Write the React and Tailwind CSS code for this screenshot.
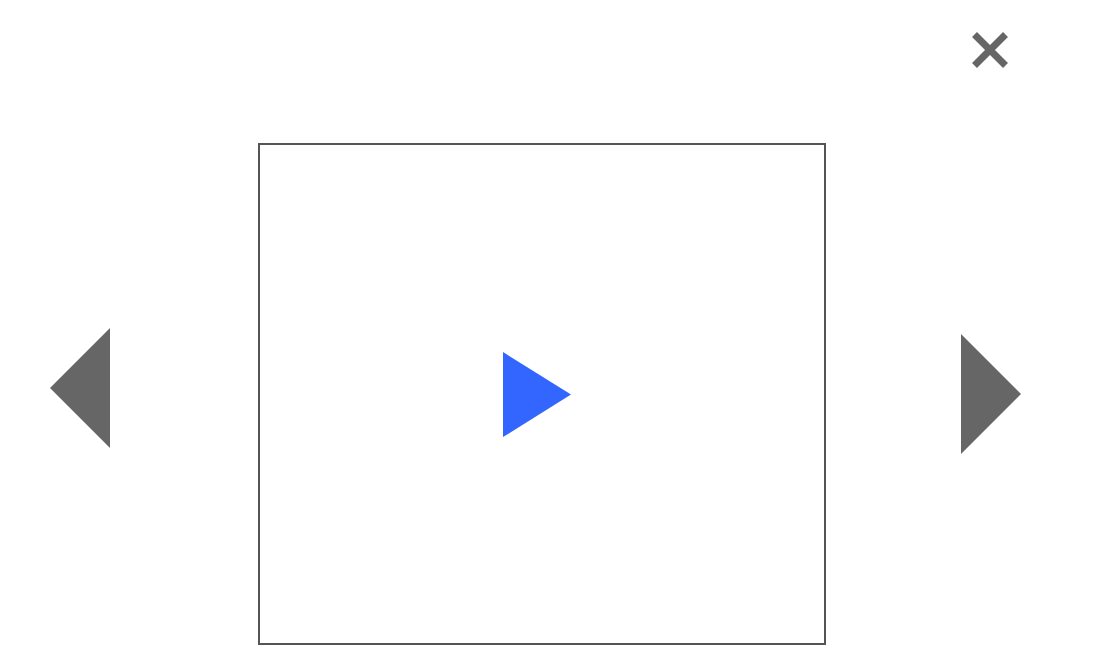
export default function App() {
  return (
    <div className="w-[1100px] h-[645px] bg-white overflow-hidden flex flex-col" style={{ fontFamily: '"Liberation Sans", sans-serif' }}>
      <div className="flex justify-end pt-[32px] pr-[92px]">
        <button className="w-[36px] h-[36px] block" aria-label="close">
          <svg width="36" height="36" viewBox="0 0 36 36">
            <path d="M2.5 2.5 L33.5 33.5 M33.5 2.5 L2.5 33.5" stroke="#666666" strokeWidth="7" strokeLinecap="butt" fill="none" />
          </svg>
        </button>
      </div>
      <div className="flex items-start mt-[75px] pl-[50px]">
        <button className="mt-[185px] block w-[60px] h-[120px]" aria-label="previous">
          <svg width="60" height="120" viewBox="0 0 60 120">
            <polygon points="60,0 0,60 60,120" fill="#666666" />
          </svg>
        </button>
        <div className="ml-[148px] w-[568px] h-[502px] border-2 border-[#555555] flex items-center justify-center shrink-0">
          <button className="block w-[68px] h-[85px] mr-[10px]" aria-label="play">
            <svg width="68" height="85" viewBox="0 0 68 85">
              <polygon points="0,0 68,42.5 0,85" fill="#3366ff" />
            </svg>
          </button>
        </div>
        <button className="ml-[135px] mt-[191px] block w-[60px] h-[120px]" aria-label="next">
          <svg width="60" height="120" viewBox="0 0 60 120">
            <polygon points="0,0 60,60 0,120" fill="#666666" />
          </svg>
        </button>
      </div>
    </div>
  );
}
